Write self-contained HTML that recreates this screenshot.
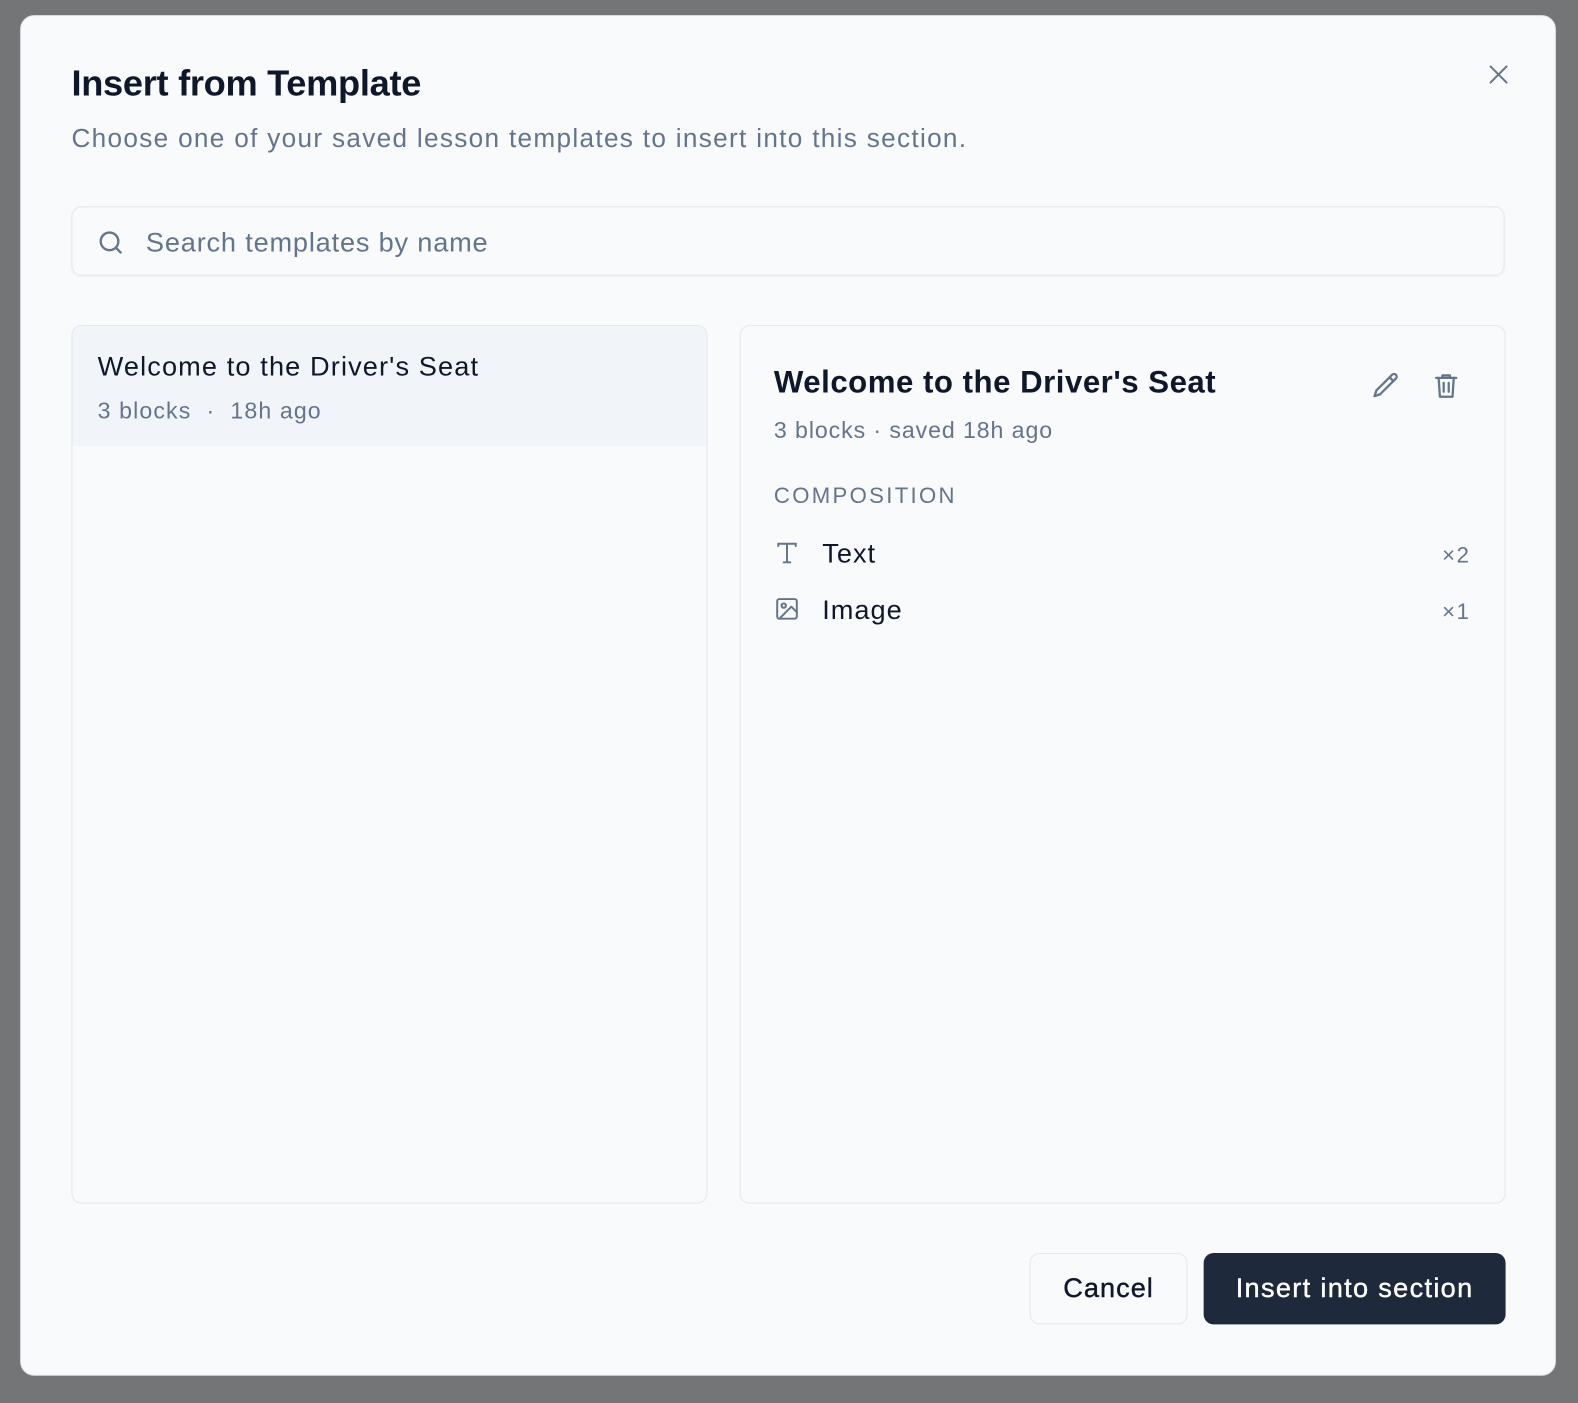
<!DOCTYPE html>
<html><head><meta charset="utf-8"><style>
*{box-sizing:border-box;margin:0;padding:0}
body{width:1578px;height:1394px;background:#747577;font-family:"Liberation Sans",sans-serif;position:relative;overflow:hidden}
.wrap{position:absolute;left:0;top:0;width:1578px;height:1394px;transform:scale(1.0064);transform-origin:0 0}
.dlg{position:absolute;left:20px;top:15px;width:1526px;height:1352px;background:#f8fafc;border-radius:14px;border:1px solid #e2e8f0}
.a{position:absolute}
h1{position:absolute;left:50px;top:46px;font-size:36px;font-weight:700;color:#0f172a;letter-spacing:-0.3px}
.sub{left:50px;top:106px;font-size:26px;color:#64748b;letter-spacing:1.3px}
.close{left:1456px;top:46px}
.search{left:50px;top:189px;width:1424px;height:69px;border:1.5px solid #e2e8f0;border-radius:10px;background:#f8fafc;box-shadow:0 1px 2px rgba(0,0,0,.04)}
.search span{position:absolute;left:73px;top:20px;font-size:27px;color:#64748b;letter-spacing:0.8px}
.search svg{position:absolute;left:24px;top:21px}
.panel{border:1.5px solid #e2e8f0;border-radius:10px;background:#f8fafc;overflow:hidden}
.l{left:50px;top:307px;width:632px;height:873px}
.r{left:714px;top:307px;width:761px;height:873px}
.sel{position:absolute;left:0;top:0;right:0;height:119px;background:#f1f5f9}
.t1{left:25px;top:25px;font-size:27px;color:#0f172a;letter-spacing:1.1px}
.m1{left:25px;top:71px;font-size:23px;color:#64748b;letter-spacing:1.1px}
.t2{left:33px;top:38px;font-size:31px;font-weight:700;color:#0f172a;letter-spacing:0.5px}
.m2{left:33px;top:90px;font-size:23px;color:#64748b;letter-spacing:0.9px}
.cap{left:33px;top:156px;font-size:22px;color:#64748b;letter-spacing:2.3px}
.it{font-size:27px;color:#0f172a;letter-spacing:1px}
.cnt{font-size:22px;color:#64748b;letter-spacing:1.5px}
.btn{top:1229px;height:71px;border-radius:10px;font-size:27px;display:flex;align-items:center;justify-content:center;-webkit-text-stroke:0.4px currentColor}
.cancel{left:1002px;width:157px;background:#f8fafc;border:1.5px solid #e2e8f0;color:#0f172a;letter-spacing:1px}
.ins{left:1175px;width:300px;background:#1e293b;color:#fff;letter-spacing:1.3px}
</style></head><body>
<div class="wrap">
<div class="dlg">
<h1>Insert from Template</h1>
<div class="a sub">Choose one of your saved lesson templates to insert into this section.</div>
<svg class="a close" width="24" height="24" viewBox="0 0 24 24" fill="none" stroke="#64748b" stroke-width="2" stroke-linecap="round"><path d="M4 4L20 20M20 4L4 20"/></svg>
<div class="a search"><svg width="28" height="28" viewBox="0 0 24 24" fill="none" stroke="#64748b" stroke-width="2" stroke-linecap="round"><circle cx="11" cy="11" r="7.5"/><path d="M20.5 20.5L16.5 16.5"/></svg><span>Search templates by name</span></div>
<div class="a panel l"><div class="sel"></div>
<div class="a t1">Welcome to the Driver's Seat</div>
<div class="a m1">3 blocks &nbsp;·&nbsp; 18h ago</div></div>
<div class="a panel r">
<div class="a t2">Welcome to the Driver's Seat</div>
<svg class="a" style="left:626px;top:44px" width="30" height="30" viewBox="0 0 24 24" fill="none" stroke="#64748b" stroke-width="1.8" stroke-linecap="round" stroke-linejoin="round"><path d="M17 3.5a2.1 2.1 0 0 1 3 3L7.5 19 3 20.5 4.5 16Z"/><path d="M15 5.5l3 3"/></svg>
<svg class="a" style="left:686px;top:44px" width="30" height="30" viewBox="0 0 24 24" fill="none" stroke="#64748b" stroke-width="1.8" stroke-linecap="round" stroke-linejoin="round"><path d="M4 6h16M9 6V4h6v2M6 6l1 15h10l1-15M10 10v7M14 10v7"/></svg>
<div class="a m2">3 blocks · saved 18h ago</div>
<div class="a cap">COMPOSITION</div>
<svg class="a" style="left:33px;top:212px" width="26" height="26" viewBox="0 0 24 24" fill="none" stroke="#64748b" stroke-width="1.8" stroke-linecap="round"><path d="M4 6V4h16v2M12 4v17M9 21h6"/></svg>
<div class="a it" style="left:81px;top:211px">Text</div>
<div class="a cnt" style="left:697px;top:215px">×2</div>
<svg class="a" style="left:33px;top:268px" width="26" height="26" viewBox="0 0 24 24" fill="none" stroke="#64748b" stroke-width="1.8" stroke-linecap="round" stroke-linejoin="round"><rect x="3" y="3" width="18" height="18" rx="2"/><circle cx="9" cy="9" r="2"/><path d="M21 15l-5-5L5 21"/></svg>
<div class="a it" style="left:81px;top:267px">Image</div>
<div class="a cnt" style="left:697px;top:271px">×1</div>
</div>
<div class="a btn cancel">Cancel</div>
<div class="a btn ins">Insert into section</div>
</div>
</div>
</body></html>
